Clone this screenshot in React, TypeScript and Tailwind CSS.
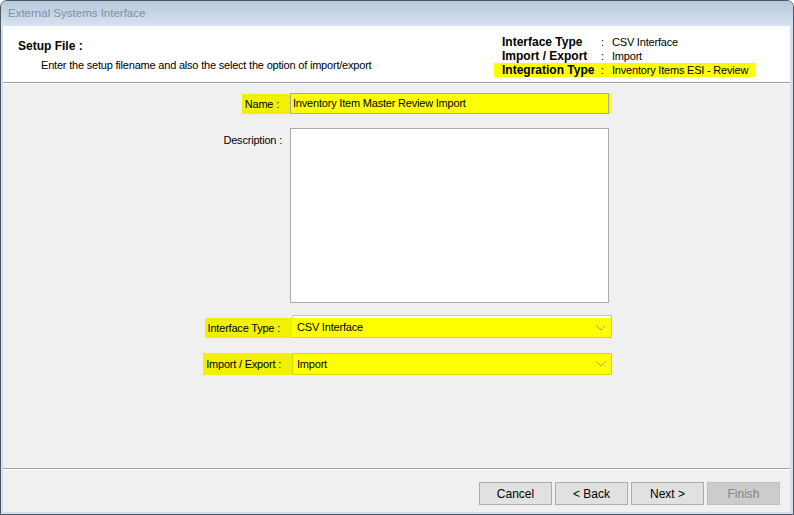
import React from 'react';

const SUMMARY = [
  { label: 'Interface Type',   value: 'CSV Interface',                mark: false },
  { label: 'Import / Export',  value: 'Import',                       mark: false },
  { label: 'Integration Type', value: 'Inventory Items ESI - Review', mark: true  },
];

function Chevron() {
  return (
    <svg width="10" height="6" viewBox="0 0 10 6" className="shrink-0">
      <path d="M0.5 0.5 L5 5 L9.5 0.5" fill="none" stroke="#a6a64a" strokeWidth="1" />
    </svg>
  );
}

function Button({ label, disabled = false }: { label: string; disabled?: boolean }) {
  return (
    <button
      disabled={disabled}
      className={
        disabled
          ? 'w-[73px] h-[23px] border border-[#bfbfbf] bg-[#cccccc] text-[12px] text-[#838383]'
          : 'w-[73px] h-[23px] border border-[#adadad] bg-[#e1e1e1] text-[12px] text-black'
      }
    >
      {label}
    </button>
  );
}

export default function App() {
  return (
    <div className="w-[794px] h-[515px] flex flex-col bg-[#d3dfec] border border-[#4d5662] rounded-t-[7px] overflow-hidden font-['Liberation_Sans',Arial,sans-serif] text-black">
      {/* title bar */}
      <div className="h-[25px] shrink-0 flex items-center pl-[7px] bg-gradient-to-b from-[#b8c9db] to-[#d6e2f0]">
        <span className="text-[11.5px] text-[#7f8fa1]">External Systems Interface</span>
      </div>

      <div className="flex-1 flex flex-col ml-[2px] mr-[3px] mb-[2px] bg-[#f0f0f0]">
        {/* header */}
        <div className="h-[56px] shrink-0 flex bg-white">
          <div className="pl-[15px] pt-[13px]">
            <div className="text-[12px] leading-[14px] font-bold">Setup File :</div>
            <div className="pl-[23px] mt-[5px] text-[11px] leading-[14px] tracking-[-0.2px]">
              Enter the setup filename and also the select the option of import/export
            </div>
          </div>
          <div className="ml-auto mr-[35px] pt-[9px]">
            {SUMMARY.map(r => (
              <div
                key={r.label}
                className={`w-[261px] h-[14px] flex items-center pl-[8px] ${r.mark ? 'bg-[#ffff00]' : ''}`}
              >
                <span className="w-[99px] text-[12px] leading-[14px] font-bold">{r.label}</span>
                <span className="w-[11px] text-[11px] leading-[14px]">:</span>
                <span className="text-[11px] leading-[14px] tracking-[-0.2px]">{r.value}</span>
              </div>
            ))}
          </div>
        </div>
        <div className="h-px bg-[#a0a0a0]" />
        <div className="h-px bg-white" />

        {/* form */}
        <div className="flex-1 flex flex-col pt-[9px] text-[11px] tracking-[-0.2px]">
          <div className="flex h-[21px]">
            <div className="w-[287px] flex justify-end">
              <span className="mt-px h-[20px] leading-[20px] pl-[3px] pr-[11px] bg-[#f0f000]">Name :</span>
            </div>
            <div className="w-[322px] h-[21px] pt-px bg-[#ffff00]">
              <div className="w-[319px] h-[21px] -mt-px border border-[#a9a9a9] pl-[2px] leading-[16px] pt-[1px]">
                Inventory Item Master Review Import
              </div>
            </div>
          </div>

          <div className="flex mt-[14px]">
            <div className="w-[287px] flex justify-end">
              <span className="pt-[5px] leading-[14px] pr-[8px]">Description :</span>
            </div>
            <div className="w-[319px] h-[175px] bg-white border border-[#ababab]" />
          </div>

          <div className="flex mt-[12px] h-[23px]">
            <div className="w-[289px] flex justify-end">
              <span className="mt-[3px] h-[20px] leading-[20px] pl-[3px] pr-[12px] bg-[#f0f000]">Interface Type :</span>
            </div>
            <div className="w-[320px] flex flex-col">
              <div className="h-[3px] border-t border-x border-[#c6c6c6] bg-white" />
              <div className="h-[20px] flex items-center justify-between pl-[5px] pr-[5px] bg-[#ffff00] border-r border-b border-[#d8d800]">
                <span>CSV Interface</span>
                <Chevron />
              </div>
            </div>
          </div>

          <div className="flex mt-[15px] h-[22px]">
            <div className="w-[289px] flex justify-end">
              <span className="h-[22px] leading-[22px] pl-[3px] pr-[11px] bg-[#f0f000]">Import / Export :</span>
            </div>
            <div className="w-[320px] h-[22px] flex items-center justify-between pl-[4px] pr-[5px] bg-[#ffff00] border border-[#d8d800]">
              <span>Import</span>
              <Chevron />
            </div>
          </div>
        </div>

        <div className="h-px bg-[#a0a0a0]" />
        <div className="h-px bg-white" />

        {/* footer */}
        <div className="h-[42px] shrink-0 flex justify-end items-start gap-[3px] pt-[12px] pr-[10px]">
          <Button label="Cancel" />
          <Button label="< Back" />
          <Button label="Next >" />
          <Button label="Finish" disabled />
        </div>
      </div>
    </div>
  );
}
